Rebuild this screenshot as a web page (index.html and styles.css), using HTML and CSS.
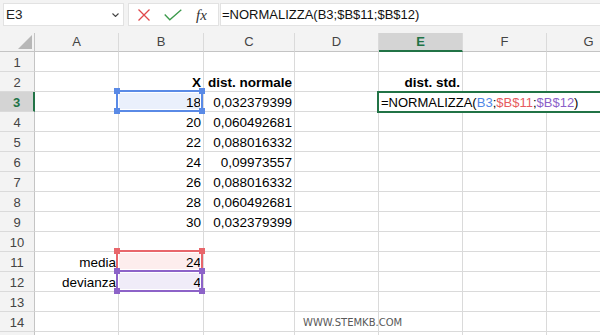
FILE: index.html
```html
<!DOCTYPE html>
<html lang="it">
<head>
<meta charset="utf-8">
<title>Excel - NORMALIZZA</title>
<link rel="stylesheet" href="styles.css">
</head>
<body>
<div class="toolbar">
  <div class="namebox">
    <span>E3</span>
    <svg class="chev" width="7" height="4" viewBox="0 0 7 4"><path d="M0.5 0.5 L3.5 3.5 L6.5 0.5" fill="none" stroke="#444" stroke-width="1.1"/></svg>
  </div>
  <div class="fxbox">
    <svg class="ic-x" width="12" height="12" viewBox="0 0 12 12"><path d="M0.5 0.5 L11.5 11.5 M11.5 0.5 L0.5 11.5" fill="none" stroke="#e0484b" stroke-width="1.3"/></svg>
    <svg class="ic-ok" width="18" height="12" viewBox="0 0 18 12"><path d="M0.7 5.5 L5.8 10.8 L17.3 0.7" fill="none" stroke="#3c9a4c" stroke-width="1.3"/></svg>
    <span class="fx">fx</span>
  </div>
  <div class="formula">=NORMALIZZA(B3;$B$11;$B$12)</div>
</div>

<div class="sheet">
  <div class="row head">
    <div class="corner"><svg width="16" height="16" viewBox="0 0 16 16"><path d="M15 1 L15 15 L1 15 Z" fill="#b7b7b7"/></svg></div>
    <div class="ch">A</div><div class="ch">B</div><div class="ch">C</div><div class="ch">D</div><div class="ch sel">E</div><div class="ch">F</div><div class="ch">G</div>
  </div>
  <div class="row"><div class="rh">1</div><div></div><div></div><div></div><div></div><div></div><div></div><div></div></div>
  <div class="row"><div class="rh">2</div><div></div><div class="b">X</div><div class="b">dist. normale</div><div></div><div class="b">dist. std.</div><div></div><div></div></div>
  <div class="row"><div class="rh sel">3</div><div></div><div class="fill-blue">18</div><div>0,032379399</div><div></div><div></div><div></div><div></div></div>
  <div class="row"><div class="rh">4</div><div></div><div>20</div><div>0,060492681</div><div></div><div></div><div></div><div></div></div>
  <div class="row"><div class="rh">5</div><div></div><div>22</div><div>0,088016332</div><div></div><div></div><div></div><div></div></div>
  <div class="row"><div class="rh">6</div><div></div><div>24</div><div>0,09973557</div><div></div><div></div><div></div><div></div></div>
  <div class="row"><div class="rh">7</div><div></div><div>26</div><div>0,088016332</div><div></div><div></div><div></div><div></div></div>
  <div class="row"><div class="rh">8</div><div></div><div>28</div><div>0,060492681</div><div></div><div></div><div></div><div></div></div>
  <div class="row"><div class="rh">9</div><div></div><div>30</div><div>0,032379399</div><div></div><div></div><div></div><div></div></div>
  <div class="row"><div class="rh">10</div><div></div><div></div><div></div><div></div><div></div><div></div><div></div></div>
  <div class="row"><div class="rh">11</div><div>media</div><div class="fill-red">24</div><div></div><div></div><div></div><div></div><div></div></div>
  <div class="row"><div class="rh">12</div><div>devianza</div><div class="fill-purple">4</div><div></div><div></div><div></div><div></div><div></div></div>
  <div class="row"><div class="rh">13</div><div></div><div></div><div></div><div></div><div></div><div></div><div></div></div>
  <div class="row"><div class="rh">14</div><div></div><div></div><div></div><div></div><div></div><div></div><div></div></div>
  <div class="row"><div class="rh"></div><div></div><div></div><div></div><div></div><div></div><div></div><div></div></div>

  <div class="ref ref-blue"><i class="h tl"></i><i class="h tr"></i><i class="h bl"></i><i class="h br"></i></div>
  <div class="ref ref-red"><i class="h tl"></i><i class="h tr"></i></div>
  <div class="ref ref-purple"><i class="h tl"></i><i class="h tr"></i><i class="h bl"></i><i class="h br"></i></div>

  <div class="editor">=NORMALIZZA(<span class="t-blue">B3</span>;<span class="t-red">$B$11</span>;<span class="t-purple">$B$12</span>)</div>

  <div class="watermark">WWW.STEMKB.COM</div>
</div>
</body>
</html>
```

FILE: styles.css
```css
* { box-sizing: border-box; margin: 0; padding: 0; }
html, body { width: 600px; height: 335px; overflow: hidden; background: #fff; }
body { font-family: "Liberation Sans", Arial, sans-serif; color: #000; }

/* formula bar */
.toolbar {
  height: 33px;
  background: #f3f3f3;
  display: flex;
  align-items: flex-start;
  padding: 3px 0 0 3px;
}
.namebox, .fxbox, .formula {
  height: 23px;
  background: #fff;
  border: 1px solid #e2e2e2;
  display: flex;
  align-items: center;
}
.namebox {
  width: 121px;
  justify-content: space-between;
  padding: 0 4px 0 2px;
  font-size: 13.5px;
  color: #222;
}
.chev { margin-top: 1px; }
.fxbox {
  width: 91px;
  margin-left: 4px;
  padding-left: 9px;
}
.ic-ok { margin-left: 14px; }
.fx {
  margin-left: 14px;
  font-family: "Liberation Serif", "Times New Roman", serif;
  font-style: italic;
  font-size: 15px;
  color: #333;
  margin-top: 1px;
}
.formula {
  flex: 1;
  margin-left: 1px;
  padding-left: 1px;
  font-size: 13px;
  color: #111;
  border-right: none;
}

/* sheet */
.sheet {
  position: relative;
  width: 600px;
  height: 302px;
  overflow: hidden;
}
.row {
  display: grid;
  grid-template-columns: 35px 84px 85px 91px 84px 84px 84px 84px;
  height: 20px;
}
.row > div {
  border-right: 1px solid #dadada;
  border-bottom: 1px solid #dadada;
  display: flex;
  align-items: flex-end;
  justify-content: flex-end;
  padding: 0 2px;
  line-height: 16px;
  font-size: 13.5px;
  white-space: nowrap;
}
.row > div.b { font-weight: bold; }

.row.head { height: 19px; }
.row.head > div {
  background: #f3f3f3;
  border-bottom-color: #c4c4c4;
  justify-content: center;
  align-items: center;
  font-size: 13px;
  color: #444;
}
.row.head > .corner {
  border-right-color: #c4c4c4;
  justify-content: flex-end;
  align-items: flex-end;
  padding: 0 1px 1px 0;
}
.row.head > .ch.sel {
  background: #d4d4d4;
  color: #217346;
  font-weight: bold;
  border-bottom: 2px solid #217346;
}
.row > .rh {
  background: #f3f3f3;
  border-right-color: #c4c4c4;
  justify-content: center;
  font-size: 13px;
  color: #444;
}
.row > .rh.sel {
  background: #d4d4d4;
  color: #217346;
  font-weight: bold;
  border-right: 2px solid #217346;
}

.fill-blue { background: #eaf0fc; }
.fill-red { background: #fdeded; }
.fill-purple { background: #f0ecf8; }

/* range reference outlines */
.ref {
  position: absolute;
  left: 116px;
  width: 87px;
  height: 22px;
  border: 2px solid;
  box-shadow: inset 0 0 0 1px #fff;
}
.ref-blue { top: 57px; border-color: #5a8ae6; }
.ref-red { top: 217px; border-color: #e8666b; }
.ref-purple { top: 237px; border-color: #8d63c8; }
.h {
  position: absolute;
  width: 6px;
  height: 6px;
  background: currentColor;
}
.ref-blue .h { color: #5a8ae6; }
.ref-red .h { color: #e8666b; }
.ref-purple .h { color: #8d63c8; }
.h.tl { left: -4px; top: -4px; }
.h.tr { right: -4px; top: -4px; }
.h.bl { left: -4px; bottom: -4px; }
.h.br { right: -4px; bottom: -4px; }

/* in-cell editor */
.editor {
  position: absolute;
  left: 377px;
  top: 58px;
  width: 223px;
  height: 22px;
  border: 2px solid #217346;
  border-right: none;
  background: #fff;
  padding-left: 2px;
  display: flex;
  align-items: flex-end;
  line-height: 16px;
  font-size: 13px;
  white-space: nowrap;
}
.t-blue { color: #4f86e6; }
.t-red { color: #e65a5f; }
.t-purple { color: #8c5fc8; }

.watermark {
  position: absolute;
  left: 303px;
  top: 284px;
  font-family: "DejaVu Sans", Verdana, sans-serif;
  font-size: 10px;
  line-height: 12px;
  color: #595959;
}
```
